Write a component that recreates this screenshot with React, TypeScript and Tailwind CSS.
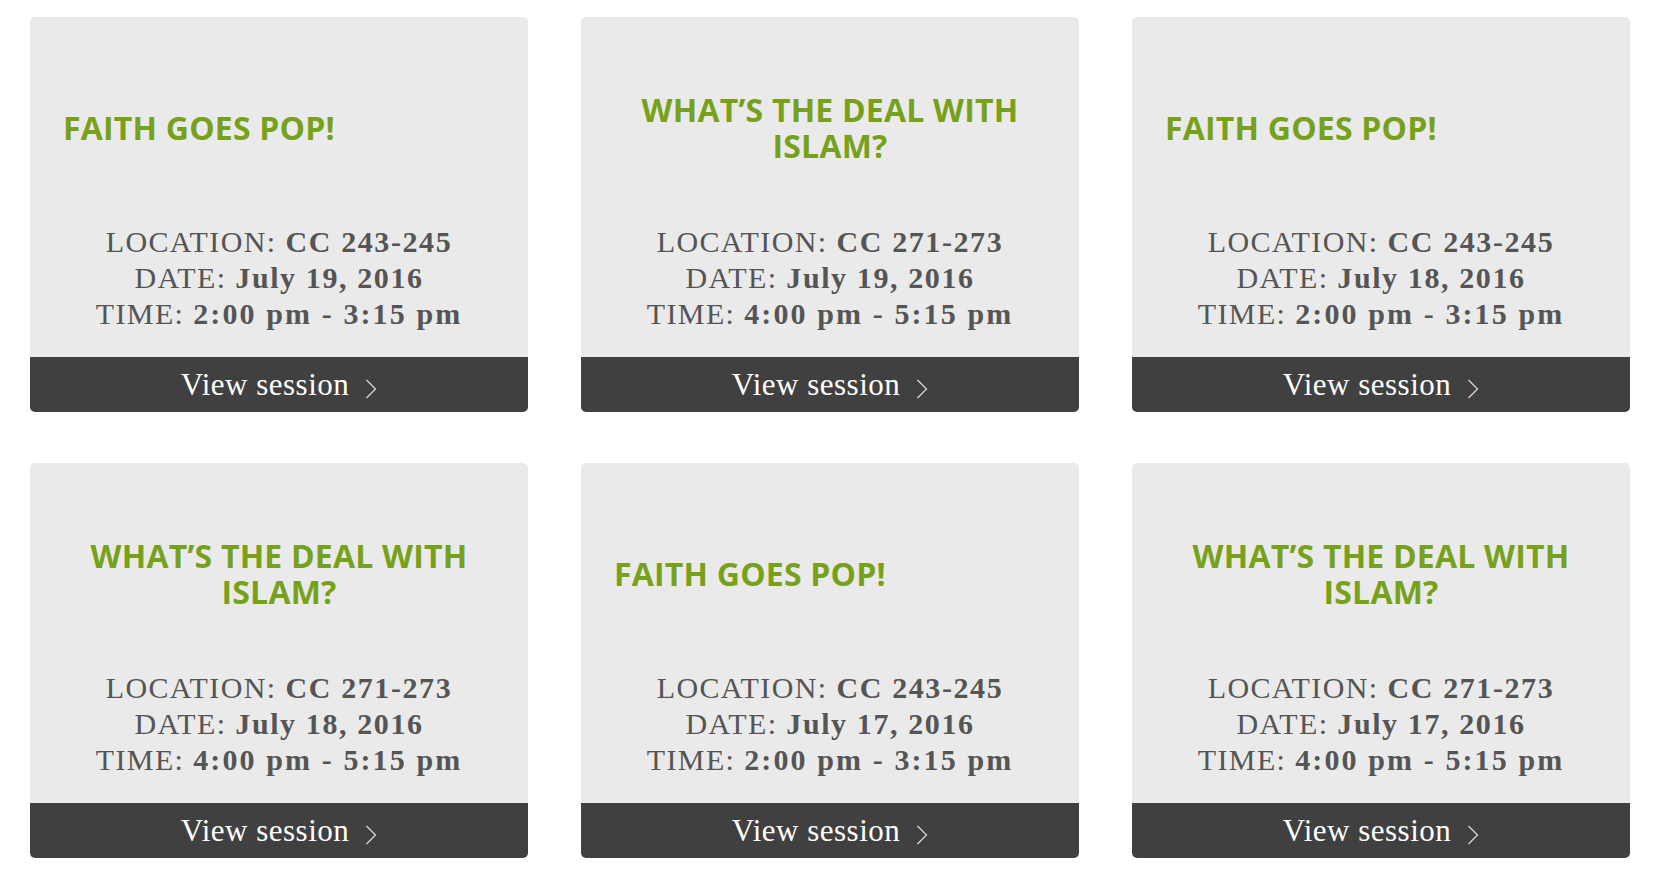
import React from "react";

type Session = {
  title: string;
  centered: boolean;
  location: string;
  date: string;
  time: string;
};

const sessions: Session[] = [
  { title: "FAITH GOES POP!", centered: false, location: "CC 243-245", date: "July 19, 2016", time: "2:00 pm - 3:15 pm" },
  { title: "WHAT\u2019S THE DEAL WITH ISLAM?", centered: true, location: "CC 271-273", date: "July 19, 2016", time: "4:00 pm - 5:15 pm" },
  { title: "FAITH GOES POP!", centered: false, location: "CC 243-245", date: "July 18, 2016", time: "2:00 pm - 3:15 pm" },
  { title: "WHAT\u2019S THE DEAL WITH ISLAM?", centered: true, location: "CC 271-273", date: "July 18, 2016", time: "4:00 pm - 5:15 pm" },
  { title: "FAITH GOES POP!", centered: false, location: "CC 243-245", date: "July 17, 2016", time: "2:00 pm - 3:15 pm" },
  { title: "WHAT\u2019S THE DEAL WITH ISLAM?", centered: true, location: "CC 271-273", date: "July 17, 2016", time: "4:00 pm - 5:15 pm" },
];

function Chevron() {
  return (
    <svg width="12" height="20" viewBox="0 0 12 20" className="ml-[16px] mt-[9px]" fill="none">
      <polyline points="1.5,1 10.5,10 1.5,19" stroke="#d6d6d6" strokeWidth="1.3" />
    </svg>
  );
}

function Card({ s }: { s: Session }) {
  return (
    <div className="flex h-[395px] flex-col overflow-hidden rounded-[5px]">
      <div className="flex h-[340px] flex-col bg-[#eaeaea]">
        <div className="flex h-[207px] items-center px-[33px] pt-[15px]">
          <h3
            className={
              "w-full font-['Open_Sans','Noto_Sans',sans-serif] text-[32px] font-bold leading-[36px] tracking-[0.2px] text-[#78a11b] " +
              (s.centered ? "text-center" : "text-left")
            }
          >
            {s.title}
          </h3>
        </div>
        <div className="text-center font-['Liberation_Serif','Times_New_Roman',serif] text-[30px] leading-[36px] tracking-[1.4px] text-[#555555]">
          <div>
            LOCATION: <span className="font-bold tracking-[1.6px]">{s.location}</span>
          </div>
          <div>
            DATE: <span className="font-bold tracking-[1.6px]">{s.date}</span>
          </div>
          <div>
            TIME: <span className="font-bold tracking-[2.1px]">{s.time}</span>
          </div>
        </div>
      </div>
      <div className="flex h-[55px] items-center justify-center bg-[#404040]">
        <span className="font-['Liberation_Serif','Times_New_Roman',serif] text-[31px] leading-[36px] tracking-[0.5px] text-white">
          View session
        </span>
        <Chevron />
      </div>
    </div>
  );
}

export default function App() {
  return (
    <div className="h-[884px] w-[1660px] bg-white px-[30px] pt-[17px]">
      <div className="grid grid-cols-3 gap-x-[53px] gap-y-[51px]">
        {sessions.map((s, i) => (
          <Card key={i} s={s} />
        ))}
      </div>
    </div>
  );
}
